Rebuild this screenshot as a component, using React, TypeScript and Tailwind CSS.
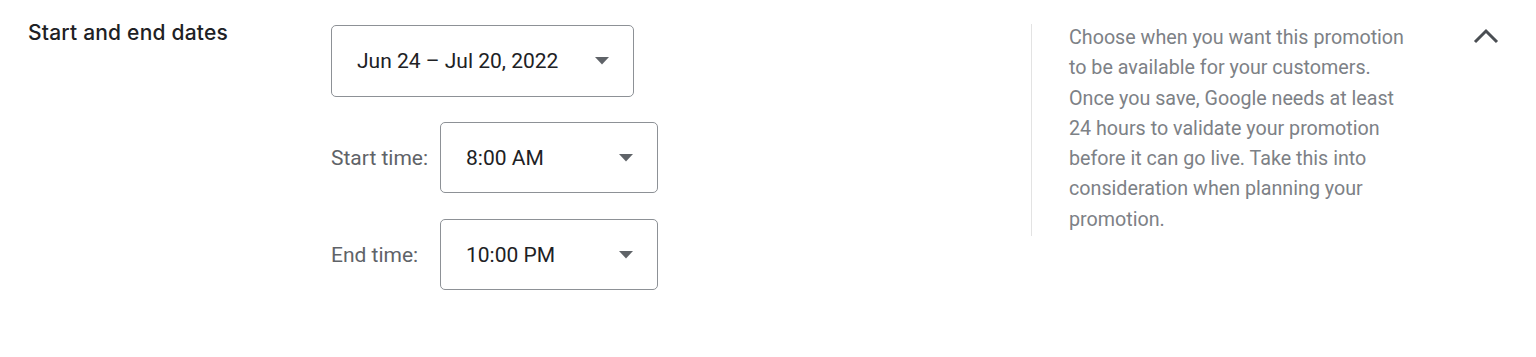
import React from 'react';

const DropArrow = () => (
  <svg width="14" height="8" viewBox="0 0 14 8" className="shrink-0">
    <path d="M0 0h14L7 7.5z" fill="#5f6368" />
  </svg>
);

interface SelectBoxProps {
  value: string;
  className?: string;
}

const SelectBox: React.FC<SelectBoxProps> = ({ value, className }) => (
  <div
    className={
      'flex items-center justify-between rounded-[5px] border border-[#8d9196] bg-white pl-[25px] pr-[24px] ' +
      (className ?? '')
    }
  >
    <span className="text-[21px] leading-7 text-[#202124]">{value}</span>
    <DropArrow />
  </div>
);

const TimeRow: React.FC<{ label: string; value: string; className?: string }> = ({ label, value, className }) => (
  <div className={'flex items-center ' + (className ?? '')}>
    <span className="w-[109px] text-[21px] leading-7 text-[#5f6368]">{label}</span>
    <SelectBox value={value} className="h-[71px] w-[218px]" />
  </div>
);

export default function App() {
  return (
    <div
      className="flex h-[357px] w-full bg-white"
      style={{ fontFamily: 'Roboto, "Liberation Sans", sans-serif' }}
    >
      <div className="w-[331px] shrink-0 pl-[28px] pt-[19px]">
        <h3
          className="text-[21px] font-medium leading-7 tracking-[0.2px] text-[#202124]"
          style={{ fontFamily: 'Inter, Roboto, sans-serif' }}
        >
          Start and end dates
        </h3>
      </div>

      <div className="flex w-[700px] shrink-0 flex-col pt-[25px]">
        <SelectBox value="Jun 24 – Jul 20, 2022" className="h-[72px] w-[303px]" />
        <TimeRow label="Start time:" value="8:00 AM" className="mt-[25px]" />
        <TimeRow label="End time:" value="10:00 PM" className="mt-[26px]" />
      </div>

      <div className="mt-[24px] h-[212px] w-[400px] shrink-0 border-l border-[#e3e3e3] pl-[37px]">
        <p className="-mt-[1px] w-[345px] text-[19.7px] leading-[30.3px] text-[#7d8186]">
          Choose when you want this promotion to be available for your customers. Once you save, Google needs at least
          24 hours to validate your promotion before it can go live. Take this into consideration when planning your
          promotion.
        </p>
      </div>

      <div className="flex flex-1 justify-end pr-[36px] pt-[27px]">
        <svg width="28" height="18" viewBox="0 0 28 18">
          <path d="M3 15L14 4l11 11" fill="none" stroke="#4a4e53" strokeWidth="3" />
        </svg>
      </div>
    </div>
  );
}
